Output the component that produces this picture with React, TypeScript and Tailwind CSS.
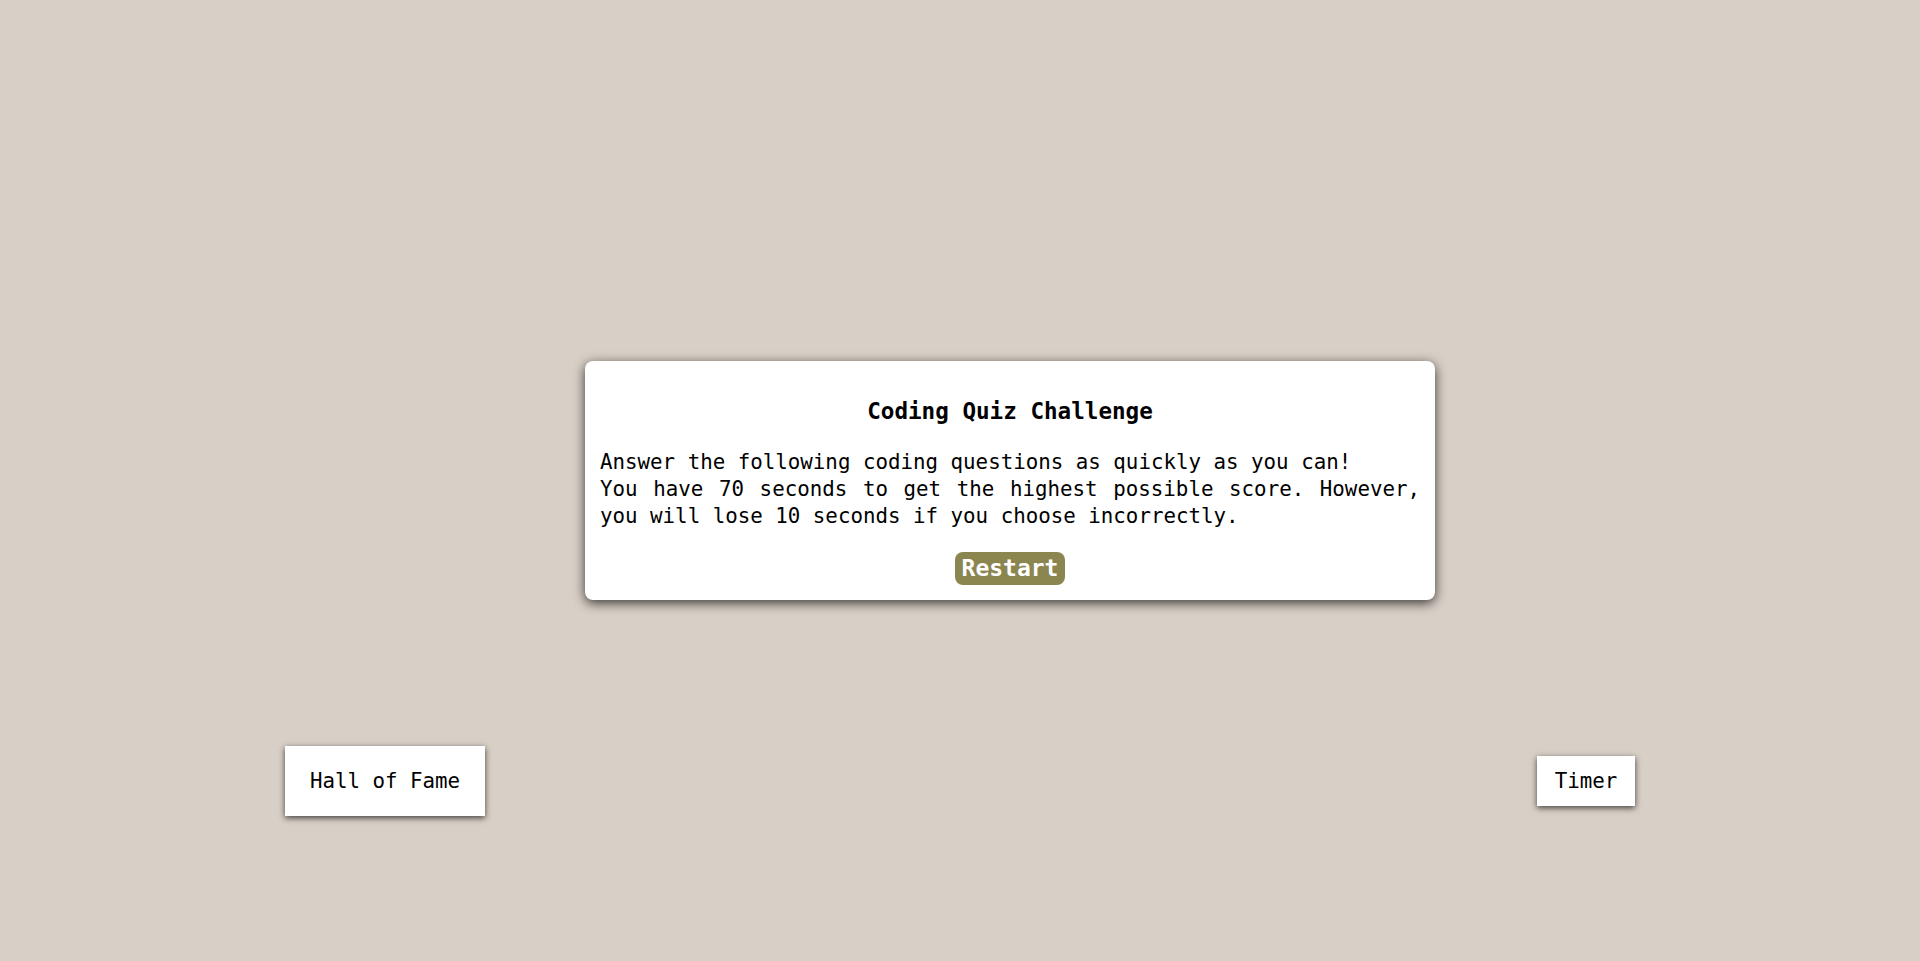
import React from 'react';

const mono = { fontFamily: '"DejaVu Sans Mono", "Liberation Mono", monospace' };

const SideBox: React.FC<{ label: string; className?: string }> = ({ label, className = '' }) => (
  <div
    className={`bg-white text-black text-[20.8px] leading-[27px] shadow-[0_2px_6px_rgba(0,0,0,0.7)] ${className}`}
  >
    {label}
  </div>
);

export default function App() {
  return (
    <div className="min-h-screen w-full bg-[#d8cfc6] flex flex-col pt-[361px]" style={mono}>
      <div className="ml-[585px] w-[850px] bg-white rounded-[8px] p-[15px] shadow-[0_3px_12px_rgba(0,0,0,0.75)] flex flex-col items-center">
        <h1 className="mt-[22px] mb-[24px] text-[22.6px] leading-[27px] font-bold text-black">
          Coding Quiz Challenge
        </h1>
        <p className="w-full text-[20.8px] leading-[27px] text-black text-justify">
          Answer the following coding questions as quickly as you can!
          <br />
          You have 70 seconds to get the highest possible score. However, you will lose 10 seconds if you choose incorrectly.
        </p>
        <button
          type="button"
          className="mt-[22px] h-[33px] px-[7px] rounded-[8px] bg-[#8b854f] text-white font-bold text-[23px] leading-[33px]"
        >
          Restart
        </button>
      </div>

      <div className="w-full px-[285px] mt-[146px] flex justify-between items-center">
        <SideBox label="Hall of Fame" className="w-[200px] h-[70px] flex items-center justify-center" />
        <SideBox label="Timer" className="w-[98px] h-[50px] flex items-center justify-center" />
      </div>
    </div>
  );
}
